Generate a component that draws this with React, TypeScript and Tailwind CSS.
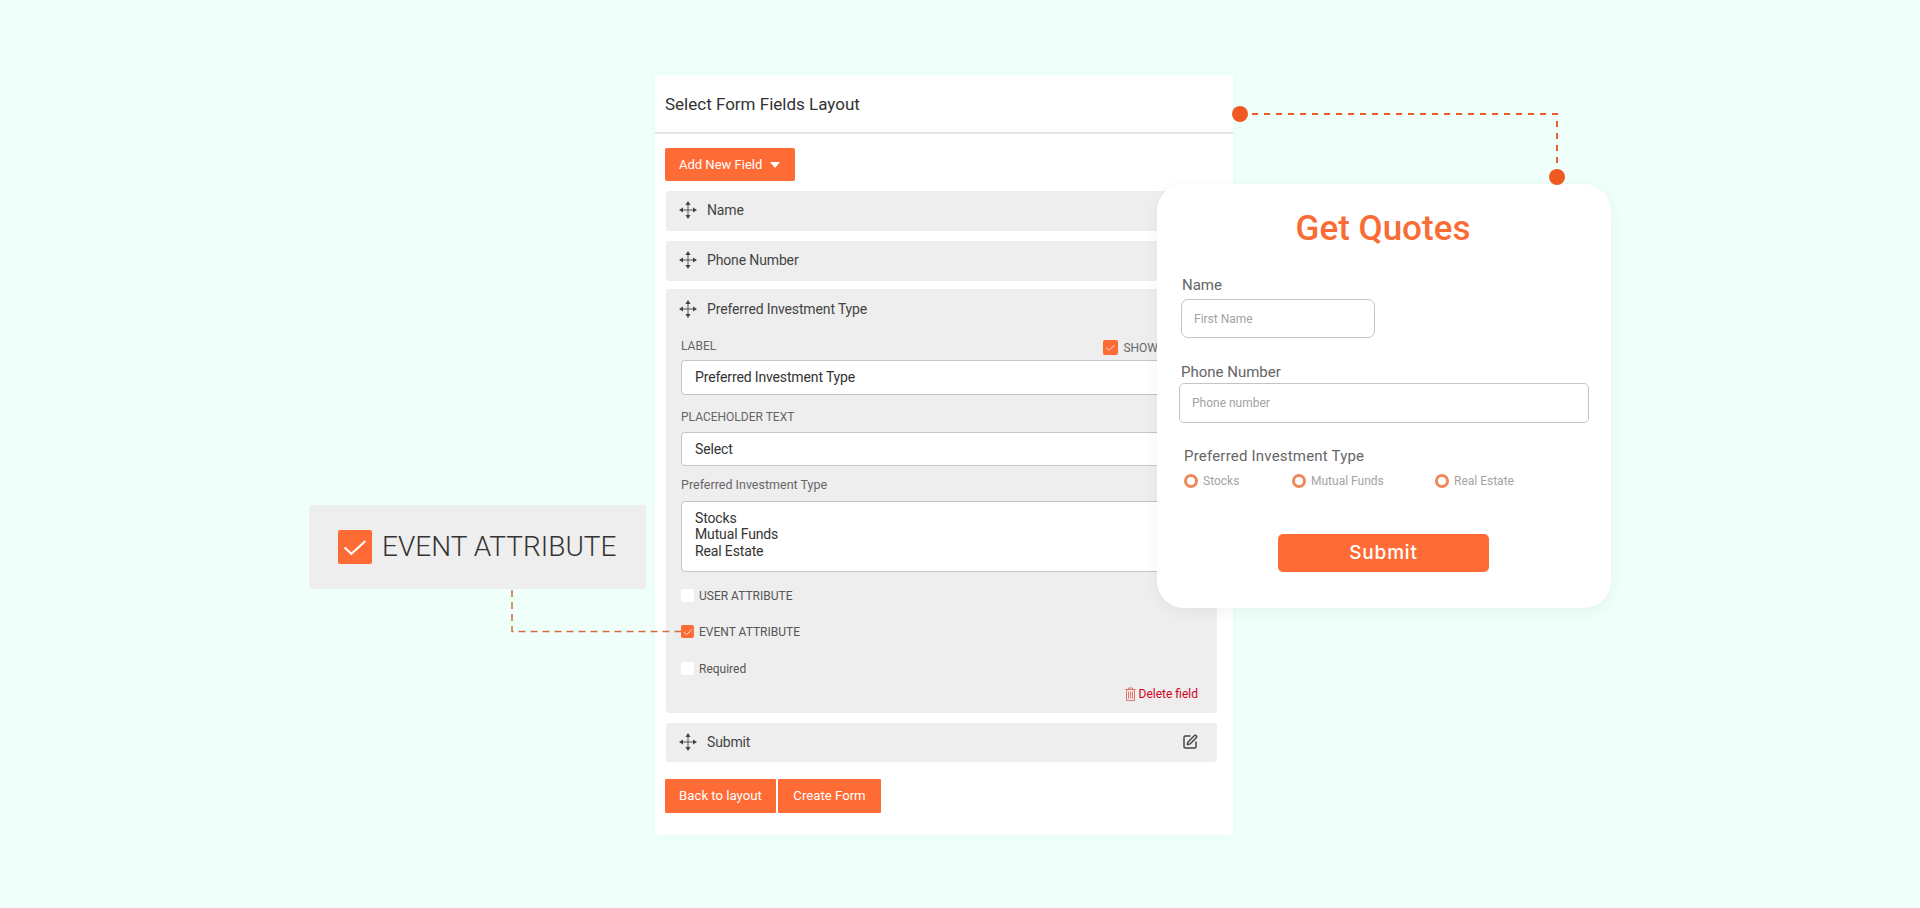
import { SquarePen } from "lucide-react";

const OR = "bg-[#ff6b35]";

function MoveIcon() {
  return (
    <svg width="18" height="18" viewBox="0 0 18 18" className="shrink-0">
      <path d="M9 3v12M3 9h12" stroke="#555" strokeWidth="1" fill="none" />
      <path d="M9 0 11.6 4H6.4ZM9 18 6.4 14H11.6ZM0 9 4 6.4V11.6ZM18 9 14 11.6V6.4Z" fill="#444" />
    </svg>
  );
}

function Check({ size, stroke = 1.6 }: { size: number; stroke?: number }) {
  return (
    <svg width={size} height={size} viewBox="0 0 16 16" className="block">
      <path d="M2.8 8.2 6.2 11.4 13.2 5" stroke="#fff" strokeWidth={stroke} fill="none" />
    </svg>
  );
}

function Row({ label, icon, cls = "pb-[1px]" }: { label: string; icon?: boolean; cls?: string }) {
  return (
    <div className={`flex h-[39.5px] items-center gap-[10px] rounded-[3px] bg-[#eeeeee] pl-[13px] pr-[19px] ${cls}`}>
      <MoveIcon />
      <span className="text-[14px] tracking-[-0.14px] text-[#444]">{label}</span>
      {icon && <SquarePen size={16} strokeWidth={2.2} className="ml-auto text-[#444]" />}
    </div>
  );
}

function FieldBox({ children, h }: { children: React.ReactNode; h: string }) {
  return (
    <div className={`${h} rounded-[4px] border border-[#c4c4c4] bg-white px-[13px] text-[14px] tracking-[-0.14px] text-[#333]`}>
      {children}
    </div>
  );
}

function CheckRow({ label, on, cls }: { label: string; on?: boolean; cls: string }) {
  return (
    <div className={`flex items-center gap-[5px] text-[12px] text-[#555] ${cls}`}>
      {on ? (
        <span className={`flex h-[13px] w-[13px] items-center justify-center rounded-[2px] ${OR}`}>
          <Check size={12} stroke={1} />
        </span>
      ) : (
        <span className="h-[13px] w-[13px] rounded-[2px] bg-white" />
      )}
      <span>{label}</span>
    </div>
  );
}

function Radio({ label, cls }: { label: string; cls: string }) {
  return (
    <div className={`flex items-center gap-[5px] ${cls}`}>
      <span className="h-[14px] w-[14px] rounded-full border-[3px] border-[#f0875a] bg-white" />
      <span className="text-[12px] text-[#a3a3a3]">{label}</span>
    </div>
  );
}

export default function App() {
  return (
    <div className="relative h-[908px] w-full overflow-hidden bg-[#effffa] pl-[655px] pt-[75px] [font-family:Roboto,sans-serif]">
      {/* Builder panel */}
      <div className="h-[760px] w-[578px] bg-white shadow-[0_0_8px_rgba(0,0,0,0.03)]">
        <div className="flex h-[59px] items-center border-b-2 border-[#e6e6e6] pl-[10px] pt-[3px] text-[17px] text-[#333]">
          Select Form Fields Layout
        </div>
        <div className="pl-[10px] pr-[16px] pt-[14px]">
          <button className={`flex h-[33px] w-[130px] items-center gap-[8px] rounded-[2px] ${OR} pl-[14px] text-[13px] text-white`}>
            Add New Field
            <span className="h-0 w-0 border-x-[5px] border-t-[6px] border-x-transparent border-t-white" />
          </button>
          <div className="ml-[1px] mt-[10px] flex flex-col">
            <Row label="Name" />
            <div className="mt-[10.5px]">
              <Row label="Phone Number" />
            </div>
            <div className="mt-[8px] h-[424px] rounded-[3px] bg-[#eeeeee]">
              <div className="flex h-[41px] items-center gap-[10px] pl-[13px]">
                <MoveIcon />
                <span className="text-[14px] tracking-[-0.14px] text-[#444]">Preferred Investment Type</span>
              </div>
              <div className="px-[15px]">
                <div className="flex h-[30px] items-start text-[12px] text-[#666]">
                  <span className="mt-[7px]">LABEL</span>
                  <span className="ml-auto mr-[44px] mt-[9px] flex items-center gap-[5px]">
                    <span className={`flex h-[15px] w-[15px] items-center justify-center rounded-[2px] ${OR}`}>
                      <Check size={13} stroke={1} />
                    </span>
                    SHOW
                  </span>
                </div>
                <FieldBox h="h-[35px] flex items-center pt-[1px]">Preferred Investment Type</FieldBox>
                <div className="mt-[15px] h-[22px] text-[12px] leading-[14px] text-[#666]">PLACEHOLDER TEXT</div>
                <FieldBox h="h-[34px] flex items-center pt-[1px]">Select</FieldBox>
                <div className="mt-[11px] h-[24px] text-[12.5px] leading-[15px] text-[#666]">Preferred Investment Type</div>
                <FieldBox h="h-[71px] pt-[8px] leading-[16.5px]">
                  Stocks
                  <br />
                  Mutual Funds
                  <br />
                  Real Estate
                </FieldBox>
                <CheckRow label="USER ATTRIBUTE" cls="mt-[15px]" />
                <CheckRow on label="EVENT ATTRIBUTE" cls="mt-[18px]" />
                <CheckRow label="Required" cls="mt-[19px]" />
                <div className="mt-[7px] flex items-center justify-end gap-[3px] pr-[4px] text-[12px] text-[#d0021b]">
                  <svg width="11" height="14" viewBox="0 0 11 14" fill="none" stroke="#e2574c" strokeWidth="0.8">
                    <path d="M0.5 2.5h10M3.5 2.5V1h4v1.5M1.5 2.5v11h8v-11M3.5 4.5v7M5.5 4.5v7M7.5 4.5v7" />
                  </svg>
                  <span>Delete field</span>
                </div>
              </div>
            </div>
            <div className="mt-[10px]">
              <Row label="Submit" icon cls="" />
            </div>
          </div>
          <div className="mt-[17px] flex gap-[2px]">
            <button className={`flex h-[34px] w-[111px] items-start justify-center rounded-[1px] ${OR} pt-[7px] text-[13.2px] text-white`}>
              Back to layout
            </button>
            <button className={`flex h-[34px] w-[103px] items-center justify-center rounded-[1px] ${OR} text-[13.2px] text-white`}>
              Create Form
            </button>
          </div>
        </div>
      </div>

      {/* Connector lines */}
      <svg className="absolute left-0 top-0" width="1920" height="908" fill="none">
        <path d="M1240 114H1557V177" stroke="#ea5f2a" strokeWidth="2" strokeDasharray="6 6" />
        <circle cx="1240" cy="114" r="8" fill="#f05a22" />
        <path d="M512 590V631.5H681" stroke="#d2703c" strokeWidth="1.5" strokeDasharray="7 5" />
      </svg>

      {/* Zoomed callout */}
      <div className="absolute left-[309px] top-[505px] flex h-[84px] w-[337px] items-center rounded-[2px] bg-[#eeeeee] pl-[29px]">
        <span className={`flex h-[34px] w-[34px] items-center justify-center rounded-[2px] ${OR}`}>
          <Check size={32} stroke={1} />
        </span>
        <span className="ml-[10px] text-[28px] font-light text-[#333]">EVENT ATTRIBUTE</span>
      </div>

      {/* Form preview */}
      <div className="absolute left-[1157px] top-[184px] h-[424px] w-[454px] rounded-[27px] bg-white shadow-[0_4px_16px_rgba(0,0,0,0.05)]">
        <div className="pr-[2px] pt-[19px] text-center text-[35px] font-medium leading-[52px] text-[#f96c35]">Get Quotes</div>
        <div className="ml-[25px] mt-[21px] text-[15px] leading-[18px] text-[#666]">Name</div>
        <div className="ml-[24px] mt-[5px] flex h-[39px] w-[194px] items-center rounded-[7px] border border-[#c4c4c4] pl-[12px] text-[12px] text-[#a3a3a3]">
          First Name
        </div>
        <div className="ml-[24px] mt-[25px] text-[15px] leading-[18px] text-[#666]">Phone Number</div>
        <div className="ml-[22px] mt-[2px] flex h-[40px] w-[410px] items-center rounded-[5px] border border-[#c4c4c4] pl-[12px] text-[12px] text-[#a3a3a3]">
          Phone number
        </div>
        <div className="ml-[27px] mt-[24px] text-[15px] leading-[18px] tracking-[0.2px] text-[#666]">Preferred Investment Type</div>
        <div className="ml-[27px] mt-[7px] flex">
          <Radio label="Stocks" cls="w-[108px]" />
          <Radio label="Mutual Funds" cls="w-[143px]" />
          <Radio label="Real Estate" cls="" />
        </div>
        <div className="ml-[121px] mt-[44px] flex h-[38px] w-[211px] items-center justify-center rounded-[5px] bg-[#ff6b35] pt-[1px] [font-family:Inter,sans-serif] text-[19px] font-medium tracking-[0.8px] text-white">
          Submit
        </div>
        <span className="absolute left-[392px] top-[-15px] h-[16px] w-[16px] rounded-full bg-[#f05a22]" />
      </div>
    </div>
  );
}
